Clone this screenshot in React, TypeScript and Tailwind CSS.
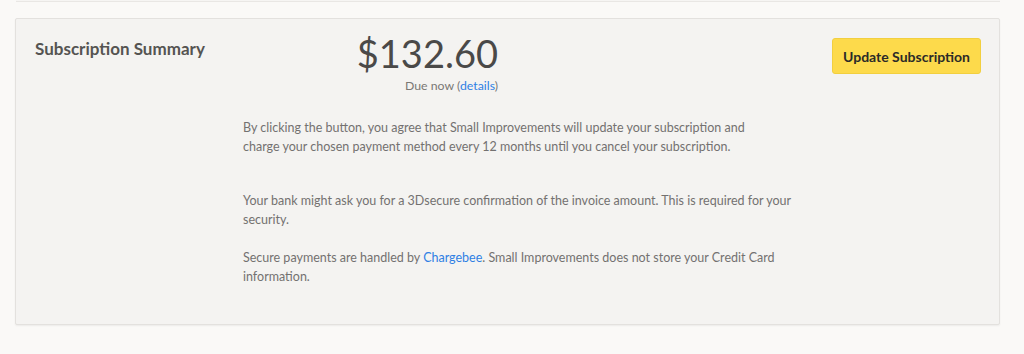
import React from "react";

const font = { fontFamily: "Lato, 'Open Sans', sans-serif" };

const SubscriptionSummary: React.FC = () => {
  return (
    <div className="mt-[16px] mr-[24px] ml-[15px] flex rounded-[2px] border border-[#e3e1de] bg-[#f4f3f1] pt-[19px] pr-[18px] pb-[38px] pl-[19px] shadow-[0_1px_2px_rgba(0,0,0,0.06)]">
      <div className="w-[208px] shrink-0">
        <h2 className="mt-[-1px] text-[17px] leading-[24px] font-bold text-[#555452]">Subscription Summary</h2>
      </div>

      <div className="flex-1">
        <div className="flex w-[255px] flex-col items-end">
          <div className="mt-[-5px] text-[38px] leading-[40px] text-[#4a4948]">$132.60</div>
          <div className="mt-[5px] text-[12.3px] leading-[16px] text-[#7a7875]">
            Due now (<a href="#" className="text-[#2f80e4]">details</a>)
          </div>
        </div>

        <div className="mt-[24px] max-w-[580px] text-[12.5px] leading-[19px] text-[#737170]">
          <p>
            By clicking the button, you agree that Small Improvements will update your subscription and
            <br />
            charge your chosen payment method every 12 months until you cancel your subscription.
          </p>
          <p className="mt-[35px]">
            Your bank might ask you for a 3Dsecure confirmation of the invoice amount. This is required for your
            <br />
            security.
          </p>
          <p className="mt-[19px]">
            Secure payments are handled by <a href="#" className="text-[#2f80e4]">Chargebee</a>. Small Improvements does
            not store your Credit Card
            <br />
            information.
          </p>
        </div>
      </div>

      <div className="shrink-0">
        <button className="h-[36px] rounded-[3px] border border-[#f2cf3f] bg-[#fdda4b] px-[10px] text-[14px] font-bold text-[#2b2a28]">
          Update Subscription
        </button>
      </div>
    </div>
  );
};

export default function App() {
  return (
    <div className="min-h-[354px] bg-[#faf9f7]" style={font}>
      <div className="mr-[24px] ml-[16px] h-[2px] border-b border-[#e9e7e4] bg-[#f6f5f3]" />
      <SubscriptionSummary />
    </div>
  );
}
